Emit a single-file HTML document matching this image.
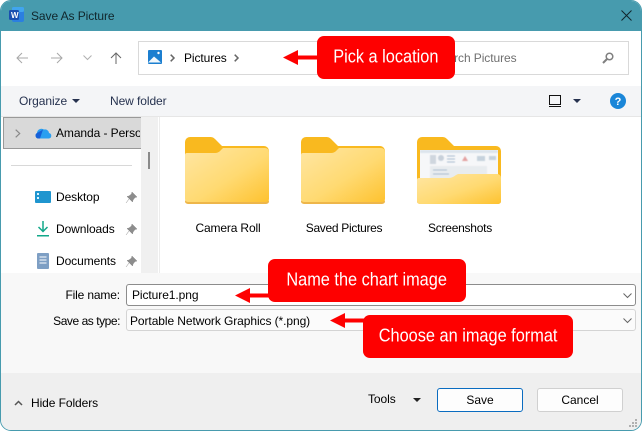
<!DOCTYPE html>
<html><head><meta charset="utf-8">
<style>
html,body{margin:0;padding:0;background:#fff}
#w{position:relative;width:642px;height:431px;overflow:hidden;background:#fff;font-family:"Liberation Sans",sans-serif;font-size:12px;color:#000}
.a{position:absolute}
.t{position:absolute;white-space:nowrap;line-height:16px;letter-spacing:-.08px}
.c{position:absolute;background:#fe0000;border-radius:7px;color:#fff;font-size:17px;line-height:42px;text-align:center;white-space:nowrap}
.c span{display:inline-block;transform:scale(.96,1.08);transform-origin:center}
svg{position:absolute;overflow:visible}
</style></head><body>
<div id="w">
<!-- frame -->
<div class="a" style="left:0;top:0;width:640px;height:429px;border:1px solid #479bae;border-radius:11px;overflow:hidden;background:#fff">
  <div class="a" style="left:0;top:0;width:640px;height:30px;background:#479bae"></div>
  <div class="a" style="left:0;top:85px;width:640px;height:30px;background:#f4f5f7"></div>
  <div class="a" style="left:0;top:115px;width:640px;height:1px;background:#e6e6e6"></div>
  <div class="a" style="left:140px;top:116px;width:17px;height:156px;background:#f0f0f0"></div>
  <div class="a" style="left:158px;top:116px;width:1px;height:156px;background:#ececec"></div>
  <div class="a" style="left:0;top:272px;width:640px;height:100px;background:#f8f8f8"></div>
  <div class="a" style="left:0;top:372px;width:640px;height:58px;background:#efefef"></div>
</div>
<!-- title -->
<svg style="left:9px;top:7px" width="16" height="16" viewBox="0 0 16 16">
  <rect x="3" y="0" width="12" height="15" rx="2" fill="#2b7fe0"/>
  <rect x="3" y="0" width="12" height="5" rx="1.5" fill="#41a5ee"/>
  <rect x="0" y="3" width="10" height="10" rx="1.5" fill="#1a4fb0"/>
  <text x="2" y="11" font-family="Liberation Sans" font-weight="bold" font-size="8" fill="#fff">W</text>
</svg>
<div class="t" style="left:31px;top:8px;color:#10262c">Save As Picture</div>
<svg style="left:621px;top:10px" width="11" height="11"><path d="M.5.5L10.5 10.5M10.5.5L.5 10.5" stroke="#10262c" stroke-width="1" fill="none"/></svg>
<!-- nav -->
<svg style="left:16px;top:52px" width="12" height="12"><path d="M12 6H1M6 1L1 6l5 5" stroke="#a8a8a8" fill="none"/></svg>
<svg style="left:51px;top:52px" width="12" height="12"><path d="M0 6h11M6 1l5 5-5 5" stroke="#a8a8a8" fill="none"/></svg>
<svg style="left:83px;top:55px" width="9" height="6"><path d="M.5.5L4.5 4.5 8.5.5" stroke="#b0b0b0" fill="none"/></svg>
<svg style="left:110px;top:52px" width="12" height="12"><path d="M6 12V1M1 6l5-5 5 5" stroke="#666" fill="none"/></svg>
<!-- address -->
<div class="a" style="left:138px;top:41px;width:489px;height:32px;border:1px solid #d9d9d9;background:#fff"></div>
<svg style="left:148px;top:50px" width="14" height="14" viewBox="0 0 14 14">
  <rect width="14" height="14" rx="1" fill="#1c7fd0"/>
  <path d="M0 12.500L6 6.500l7 6H0z" fill="#f2f8fc"/><circle cx="10.5" cy="3" r="1.2" fill="#fff"/>
</svg>
<svg style="left:170px;top:54px" width="5" height="8"><path d="M.7.7L4 4 .7 7.300" stroke="#666" stroke-width="1.500" fill="none"/></svg>
<div class="t" style="left:184px;top:50px">Pictures</div>
<svg style="left:234px;top:54px" width="5" height="8"><path d="M.7.7L4 4 .7 7.300" stroke="#666" stroke-width="1.500" fill="none"/></svg>
<div class="t" style="left:433px;top:50px;color:#6f6f6f">Search Pictures</div>
<svg style="left:602px;top:52px" width="12" height="12"><circle cx="7.500" cy="4.500" r="3.300" fill="none" stroke="#808080" stroke-width="1.500"/><path d="M5 7L1 11" stroke="#808080" stroke-width="2"/></svg>
<!-- toolbar -->
<div class="t" style="left:19px;top:93px;color:#26324f">Organize</div>
<svg style="left:72px;top:99px" width="8" height="4"><path d="M0 0h8L4 4z" fill="#26324f"/></svg>
<div class="t" style="left:110px;top:93px;color:#26324f">New folder</div>
<div class="a" style="left:549px;top:95px;width:10px;height:8px;border:1px solid #111"></div>
<div class="a" style="left:549px;top:106px;width:12px;height:1px;background:#111"></div>
<svg style="left:573px;top:99px" width="8" height="4"><path d="M0 0h8L4 4z" fill="#26324f"/></svg>
<svg style="left:610px;top:93px" width="16" height="16"><circle cx="8" cy="8" r="8" fill="#1a86d8"/><text x="8" y="12" text-anchor="middle" font-family="Liberation Sans" font-weight="bold" font-size="11" fill="#fff">?</text></svg>
<!-- sidebar -->
<div class="a" style="left:3px;top:117px;width:137px;height:30px;background:#d9d9d9;border:1px solid #999;border-right:0;box-sizing:content-box"></div>
<svg style="left:15px;top:129px" width="6" height="9"><path d="M.7.7L4.700 4.500 .7 8.300" stroke="#888" stroke-width="1.200" fill="none"/></svg>
<svg style="left:35px;top:127px" width="17" height="12" viewBox="0 0 17 12">
  <path d="M3 11.500A3 3 0 0 1 2 6 4.500 4.500 0 0 1 9 2.500 4 4 0 0 1 14 6a2.800 2.800 0 0 1 0 5.500z" fill="#2a9ff0"/>
  <path d="M3 11.500A3 3 0 0 1 2 6L8 2.500 5 11.500z" fill="#1660d8"/>
</svg>
<div class="a" style="left:56px;top:125px;width:84px;height:16px;overflow:hidden"><div class="t" style="left:0;top:0">Amanda - Personal</div></div>
<div class="a" style="left:148px;top:152px;width:2px;height:17px;background:#8a8a8a"></div>
<div class="a" style="left:11px;top:165px;width:121px;height:1px;background:#d8d8d8"></div>
<svg style="left:35px;top:191px" width="16" height="12"><rect width="16" height="12" rx="1" fill="#1f95cf"/><rect x="2" y="2" width="2" height="2" fill="#d8f2ff"/><rect x="2" y="6" width="2" height="2" fill="#d8f2ff"/></svg>
<div class="t" style="left:56px;top:189px">Desktop</div>
<svg style="left:37px;top:221px" width="12" height="16"><path d="M6 0v10M1.500 6L6 10.500 10.500 6" stroke="#12a88a" stroke-width="1.500" fill="none"/><rect y="14" width="12" height="1.500" fill="#12a88a"/></svg>
<div class="t" style="left:56px;top:221px">Downloads</div>
<svg style="left:37px;top:253px" width="12" height="16"><rect width="12" height="16" rx="1" fill="#7e9fc4"/><path d="M2.500 4h7M2.500 7h7M2.500 10h7" stroke="#fff"/></svg>
<div class="t" style="left:56px;top:253px">Documents</div>
<svg style="left:126px;top:192px" width="11" height="11" viewBox="0 0 11 11"><path d="M6 0l5 5-2 .5L7 8 6.500 10 1 4.500 3 4l2.500-2z M3 7L0 11" fill="#8d8d8d" stroke="#8d8d8d" stroke-width=".5"/></svg>
<svg style="left:126px;top:224px" width="11" height="11" viewBox="0 0 11 11"><path d="M6 0l5 5-2 .5L7 8 6.500 10 1 4.500 3 4l2.500-2z M3 7L0 11" fill="#8d8d8d" stroke="#8d8d8d" stroke-width=".5"/></svg>
<svg style="left:126px;top:256px" width="11" height="11" viewBox="0 0 11 11"><path d="M6 0l5 5-2 .5L7 8 6.500 10 1 4.500 3 4l2.500-2z M3 7L0 11" fill="#8d8d8d" stroke="#8d8d8d" stroke-width=".5"/></svg>
<!-- folders -->
<svg width="0" height="0" style="position:absolute"><defs>
<linearGradient id="g" x1="0" y1="0" x2="1" y2="1"><stop offset="0" stop-color="#ffe6a3"/><stop offset=".55" stop-color="#ffda72"/><stop offset="1" stop-color="#fec22f"/></linearGradient>
<filter id="b" x="0" y="0" width="1" height="1"><feGaussianBlur stdDeviation=".5"/></filter>
</defs></svg>
<svg style="left:185px;top:137px" width="84" height="67" viewBox="0 0 84 67">
  <path d="M0 5a5 5 0 0 1 5-5h20c3 0 4 1 6 3l6 6h42a5 5 0 0 1 5 5v10H0z" fill="#f9b91f"/>
  <rect x="0" y="62" width="84" height="5" rx="3" fill="#eeb64a"/>
  <path d="M0 18a2 2 0 0 1 2-2h27c4 0 5-1 7-3l2-2h42a4 4 0 0 1 4 4v47a3 3 0 0 1-3 3H3a3 3 0 0 1-3-3z" fill="url(#g)"/>
</svg>
<svg style="left:301px;top:137px" width="84" height="67" viewBox="0 0 84 67">
  <path d="M0 5a5 5 0 0 1 5-5h20c3 0 4 1 6 3l6 6h42a5 5 0 0 1 5 5v10H0z" fill="#f9b91f"/>
  <rect x="0" y="62" width="84" height="5" rx="3" fill="#eeb64a"/>
  <path d="M0 18a2 2 0 0 1 2-2h27c4 0 5-1 7-3l2-2h42a4 4 0 0 1 4 4v47a3 3 0 0 1-3 3H3a3 3 0 0 1-3-3z" fill="url(#g)"/>
</svg>
<svg style="left:417px;top:137px" width="84" height="67" viewBox="0 0 84 67">
  <path d="M0 5a5 5 0 0 1 5-5h20c3 0 4 1 6 3l6 6h42a5 5 0 0 1 5 5v30H0z" fill="#f9b91f"/>
  <rect x="3" y="13" width="78" height="32" fill="#f6f7f9"/>
  <g filter="url(#b)">
    <rect x="3" y="13" width="78" height="3" fill="#dce4ec"/>
    <rect x="13" y="18" width="6" height="9" fill="#cfd6de"/>
    <circle cx="24" cy="21" r="3" fill="#c7d0da"/>
    <path d="M30 19h8M30 22h8M30 25h8" stroke="#a9bdd0"/>
    <path d="M48 19l3 5h-6z" fill="#e3a0a0"/>
    <path d="M60 19h8v5h-8zM72 19h7v4h-7z" fill="#c6d2dd"/>
    <rect x="13" y="29" width="57" height="16" fill="#e8ecef"/>
    <path d="M16 33h14M16 37h16" stroke="#a4b8cb"/>
  </g>
  <rect x="0" y="62" width="84" height="5" rx="3" fill="#eeb64a"/>
  <path d="M0 43a2 2 0 0 1 2-2h28c5 0 6-1 9-3l2-1h39a4 4 0 0 1 4 4v23a3 3 0 0 1-3 3H3a3 3 0 0 1-3-3z" fill="url(#g)"/>
</svg>
<div class="t" style="left:185px;top:220px;width:86px;text-align:center;letter-spacing:-.15px">Camera Roll</div>
<div class="t" style="left:301px;top:220px;width:86px;text-align:center;letter-spacing:-.3px">Saved Pictures</div>
<div class="t" style="left:417px;top:220px;width:86px;text-align:center;letter-spacing:-.25px">Screenshots</div>
<!-- form -->
<div class="t" style="left:20px;top:287px;width:100px;text-align:right;letter-spacing:-.15px">File name:</div>
<div class="t" style="left:20px;top:313px;width:100px;text-align:right;letter-spacing:-.45px">Save as type:</div>
<div class="a" style="left:126px;top:284px;width:508px;height:20px;border:1px solid #8c8c8c;border-radius:3px;background:#fff"></div>
<div class="a" style="left:126px;top:309px;width:508px;height:20px;border:1px solid #d4d4d4;border-radius:3px;background:#fbfbfb"></div>
<div class="t" style="left:132px;top:287px">Picture1.png</div>
<div class="t" style="left:130px;top:313px">Portable Network Graphics (*.png)</div>
<svg style="left:623px;top:293px" width="9" height="5"><path d="M.5.5l4 4 4-4" stroke="#666" fill="none"/></svg>
<svg style="left:623px;top:318px" width="9" height="5"><path d="M.5.5l4 4 4-4" stroke="#666" fill="none"/></svg>
<!-- footer -->
<svg style="left:14px;top:400px" width="9" height="6"><path d="M1 5l3.500-3.500L8 5" stroke="#555" stroke-width="1.500" fill="none"/></svg>
<div class="t" style="left:31px;top:395px">Hide Folders</div>
<div class="t" style="left:368px;top:391px">Tools</div>
<svg style="left:413px;top:398px" width="8" height="4"><path d="M0 0h8L4 4z" fill="#222"/></svg>
<div class="a" style="left:437px;top:388px;width:84px;height:22px;border:1px solid #0a6cc0;border-radius:3px;background:#fdfdfd;text-align:center;line-height:22px">Save</div>
<div class="a" style="left:537px;top:388px;width:84px;height:22px;border:1px solid #d0d0d0;border-radius:3px;background:#fdfdfd;text-align:center;line-height:22px">Cancel</div>
<svg style="left:629px;top:419px" width="9" height="9" fill="#b0b0b0"><rect x="6" y="0" width="2" height="2"/><rect x="3" y="3" width="2" height="2"/><rect x="6" y="3" width="2" height="2"/><rect x="0" y="6" width="2" height="2"/><rect x="3" y="6" width="2" height="2"/><rect x="6" y="6" width="2" height="2"/></svg>
<!-- callouts -->
<svg style="left:283px;top:50px" width="36" height="15"><path d="M0 7.500L15 0v5.500H36v4H15V15z" fill="#fe0000"/></svg>
<div class="c" style="left:317px;top:36px;width:138px;height:43px"><span>Pick a location</span></div>
<svg style="left:235px;top:288px" width="36" height="15"><path d="M0 7.500L15 0v5.500H36v4H15V15z" fill="#fe0000"/></svg>
<div class="c" style="left:268px;top:259px;width:198px;height:43px"><span>Name the chart image</span></div>
<svg style="left:330px;top:313px" width="36" height="15"><path d="M0 7.500L15 0v5.500H36v4H15V15z" fill="#fe0000"/></svg>
<div class="c" style="left:363px;top:315px;width:210px;height:43px"><span>Choose an image format</span></div>
</div>
</body></html>
